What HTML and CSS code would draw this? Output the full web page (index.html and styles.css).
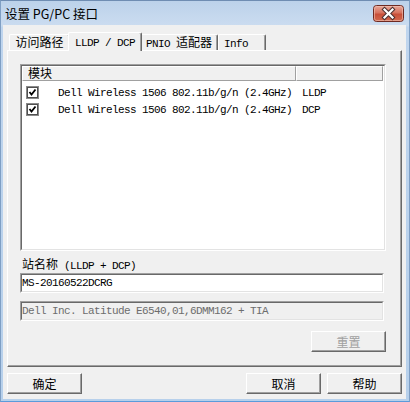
FILE: index.html
```html
<!DOCTYPE html>
<html lang="zh-CN">
<head>
<meta charset="utf-8">
<title>设置 PG/PC 接口</title>
<link rel="stylesheet" href="styles.css">
</head>
<body>
<div class="window">
  <div class="titlebar">
    <span class="title">设置 PG/PC 接口</span>
    <svg class="close" width="31" height="17" viewBox="0 0 31 17">
      <defs>
        <linearGradient id="cg" x1="0" y1="0" x2="0" y2="1">
          <stop offset="0" stop-color="#e9aa9c"/>
          <stop offset="0.45" stop-color="#d7735f"/>
          <stop offset="0.55" stop-color="#c84f39"/>
          <stop offset="1" stop-color="#d36a4f"/>
        </linearGradient>
      </defs>
      <rect x="0.5" y="0.5" width="30" height="16" rx="3" fill="url(#cg)" stroke="#6e2a22"/>
      <rect x="1.5" y="1.5" width="28" height="14" rx="2" fill="none" stroke="#f2c4b8" stroke-opacity="0.6"/>
      <path d="M11.5 4.5 L19.5 12.5 M19.5 4.5 L11.5 12.5" stroke="#4a3030" stroke-width="4.2" stroke-linecap="square"/>
      <path d="M11.5 4.5 L19.5 12.5 M19.5 4.5 L11.5 12.5" stroke="#ffffff" stroke-width="2.2" stroke-linecap="square"/>
    </svg>
  </div>
  <div class="client">
    <div class="tabs">
      <div class="tab t1">访问路径</div>
      <div class="tab t2 active"><span class="mono">LLDP / DCP</span></div>
      <div class="tab t3"><span class="mono">PNIO </span>适配器</div>
      <div class="tab t4"><span class="mono">Info</span></div>
    </div>
    <div class="panel">
      <div class="listbox">
        <div class="listinner">
          <div class="lhead">
            <div class="hc c1">模块</div>
            <div class="hc c2"></div>
          </div>
          <div class="rows">
            <div class="lrow">
              <div class="cell1">
                <svg class="cb" width="13" height="13" viewBox="0 0 13 13">
                  <rect x="0.5" y="0.5" width="12" height="12" fill="#ffffff" stroke="#8a8a8a"/>
                  <rect x="1.5" y="1.5" width="10" height="10" fill="none" stroke="#4f4f4f"/>
                  <path d="M3.5 6 L5.5 8.5 L9.5 3.5" fill="none" stroke="#000" stroke-width="1.8"/>
                </svg>
                <span class="mono name">Dell Wireless 1506 802.11b/g/n (2.4GHz)</span>
              </div>
              <div class="cell2 mono">LLDP</div>
            </div>
            <div class="lrow">
              <div class="cell1">
                <svg class="cb" width="13" height="13" viewBox="0 0 13 13">
                  <rect x="0.5" y="0.5" width="12" height="12" fill="#ffffff" stroke="#8a8a8a"/>
                  <rect x="1.5" y="1.5" width="10" height="10" fill="none" stroke="#4f4f4f"/>
                  <path d="M3.5 6 L5.5 8.5 L9.5 3.5" fill="none" stroke="#000" stroke-width="1.8"/>
                </svg>
                <span class="mono name">Dell Wireless 1506 802.11b/g/n (2.4GHz)</span>
              </div>
              <div class="cell2 mono">DCP</div>
            </div>
          </div>
        </div>
      </div>
      <div class="label">站名称<span class="mono"> (LLDP + DCP)</span></div>
      <div class="field"><div class="fieldinner mono">MS-20160522DCRG</div></div>
      <div class="field disabled"><div class="fieldinner mono">Dell Inc. Latitude E6540,01,6DMM162 + TIA</div></div>
      <div class="btnrow"><button class="btn" disabled>重置</button></div>
    </div>
    <div class="footer">
      <button class="btn">确定</button>
      <div class="rightbtns">
        <button class="btn">取消</button>
        <button class="btn">帮助</button>
      </div>
    </div>
  </div>
</div>
</body>
</html>
```

FILE: styles.css
```css
html, body {
  margin: 0;
  padding: 0;
}
body {
  width: 410px;
  height: 402px;
  overflow: hidden;
  background: #a9c6e6;
  font-family: "Noto Sans CJK SC", "Liberation Sans", sans-serif;
  font-size: 12px;
  color: #000;
}
.window {
  width: 410px;
  height: 402px;
  box-sizing: border-box;
  display: flex;
  flex-direction: column;
  background: linear-gradient(to bottom, #bcd2ea 0, #cbdcf0 25px, #bfd5ee 26px, #b7d0eb 100%);
  border-left: 1px solid #7f9fc4;
  border-top: 1px solid #6f8db2;
  border-right: 1px solid #7f9fc4;
  border-bottom: 1px solid #5b9bdb;
}
.mono {
  font-family: "Liberation Mono", "Noto Sans CJK SC", monospace;
  font-size: 11px;
  letter-spacing: -0.6px;
}
.titlebar {
  height: 24px;
  flex: none;
  display: flex;
  justify-content: space-between;
  align-items: flex-start;
  padding-left: 4px;
  padding-right: 5px;
}
.title {
  margin-top: 5px;
  line-height: 16px;
  font-size: 12.5px;
  color: #000;
}
.close {
  margin-top: 4px;
  display: block;
}
.client {
  flex: 1;
  margin: 0 3px 2px 2px;
  background: #f0f0f0;
  padding: 7px 4px 5px 4px;
  display: flex;
  flex-direction: column;
}
.tabs {
  height: 18px;
  display: flex;
  align-items: flex-end;
  padding-left: 2px;
  flex: none;
}
.tab {
  box-sizing: border-box;
  height: 16px;
  line-height: 14px;
  background: #f0f0f0;
  border-top: 1px solid #ffffff;
  border-left: 1px solid #ffffff;
  border-right: 1px solid #696969;
  box-shadow: inset -1px 0 #a0a0a0;
  border-radius: 2px 2px 0 0;
  text-align: center;
  white-space: nowrap;
}
.t1 { width: 61px; }
.t2 { width: 74px; margin-left: -2px; margin-right: -2px; }
.t3 { width: 78px; }
.t4 { width: 48px; text-align: left; padding-left: 5px; }
.tab.active {
  height: 19px;
  margin-bottom: -1px;
  position: relative;
  z-index: 1;
  line-height: 15px;
}
.panel {
  flex: none;
  height: 317px;
  box-sizing: border-box;
  border-top: 1px solid #ffffff;
  border-left: 1px solid #ffffff;
  border-right: 1px solid #696969;
  border-bottom: 1px solid #696969;
  box-shadow: inset -1px -1px #a0a0a0;
  padding: 13px 15px 0 12px;
  display: flex;
  flex-direction: column;
}
.listbox {
  height: 187px;
  box-sizing: border-box;
  border: 1px solid;
  border-color: #a0a0a0 #ffffff #ffffff #a0a0a0;
  flex: none;
}
.listinner {
  height: 100%;
  box-sizing: border-box;
  border: 1px solid;
  border-color: #696969 #e3e3e3 #e3e3e3 #696969;
  background: #ffffff;
}
.lhead {
  display: flex;
  height: 15px;
}
.hc {
  box-sizing: border-box;
  height: 15px;
  background: #f0f0f0;
  border-top: 1px solid #ffffff;
  border-left: 1px solid #ffffff;
  border-right: 1px solid #a0a0a0;
  border-bottom: 1px solid #a0a0a0;
  line-height: 12px;
  padding-left: 5px;
  font-size: 12px;
}
.c1 { width: 274px; }
.c2 { width: 87px; }
.rows {
  padding-top: 3px;
}
.lrow {
  height: 17px;
  display: flex;
  align-items: center;
}
.cell1 {
  width: 274px;
  display: flex;
  align-items: center;
}
.cb {
  display: block;
  margin-left: 4px;
  flex: none;
}
.name {
  margin-left: 19px;
  white-space: nowrap;
}
.cell2 {
  padding-left: 6px;
  white-space: nowrap;
}
.label {
  height: 22px;
  box-sizing: border-box;
  padding-top: 4px;
  padding-left: 2px;
  line-height: 18px;
  flex: none;
  white-space: nowrap;
}
.field {
  height: 20px;
  box-sizing: border-box;
  margin-right: 2px;
  border: 1px solid;
  border-color: #a0a0a0 #ffffff #ffffff #a0a0a0;
  flex: none;
}
.fieldinner {
  height: 100%;
  box-sizing: border-box;
  border: 1px solid;
  border-color: #696969 #e3e3e3 #e3e3e3 #696969;
  background: #ffffff;
  line-height: 16px;
  padding-left: 0;
  white-space: nowrap;
}
.field.disabled {
  margin-top: 8px;
}
.field.disabled .fieldinner {
  background: #f0f0f0;
  color: #6d6d6d;
}
.btnrow {
  margin-top: 10px;
  display: flex;
  justify-content: flex-end;
  flex: none;
}
.btn {
  width: 75px;
  height: 21px;
  box-sizing: border-box;
  margin: 0;
  padding: 0;
  background: #f0f0f0;
  border: 1px solid;
  border-color: #ffffff #696969 #696969 #ffffff;
  box-shadow: inset -1px -1px #a0a0a0;
  font-family: "Noto Sans CJK SC", "Liberation Sans", sans-serif;
  font-size: 12px;
  line-height: 17px;
  color: #000;
  border-radius: 0;
}
.btn:disabled {
  color: #a0a0a0;
}
.footer {
  margin-top: 6px;
  display: flex;
  justify-content: space-between;
  flex: none;
}
.rightbtns {
  display: flex;
  gap: 6px;
}
```
